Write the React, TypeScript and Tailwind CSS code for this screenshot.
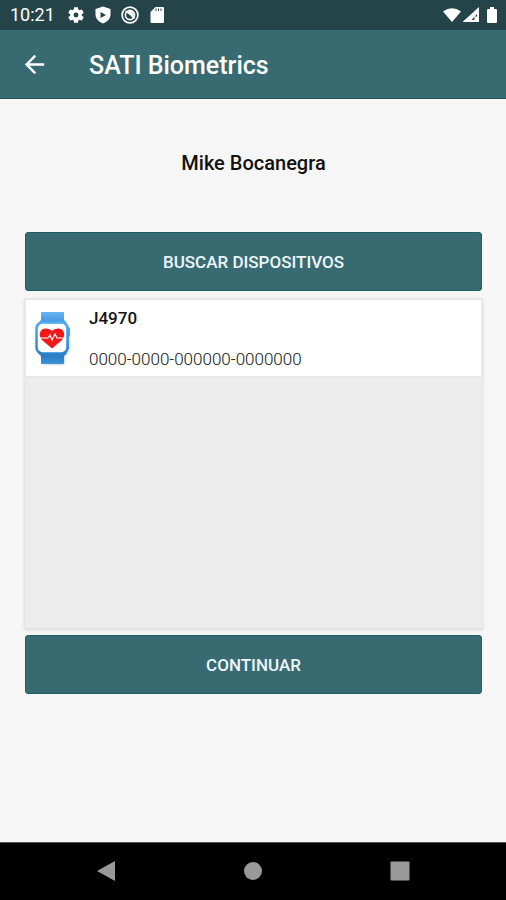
import React from "react";

function StatusBar() {
  return (
    <div className="flex h-[30px] items-center justify-between bg-[#25444a] pr-2 pl-2.5 text-white">
      <div className="flex items-center gap-3">
        <time className="w-[45px] text-lg leading-5 whitespace-nowrap">10:21</time>
        <div className="flex items-center gap-[9px]">
          <svg viewBox="1 1 22 22" className="size-[18px]" fill="currentColor" aria-hidden="true">
            <path d="M19.14 12.94c.04-.3.06-.61.06-.94s-.02-.64-.07-.94l2.03-1.58a.5.5 0 0 0 .12-.61l-1.92-3.32a.49.49 0 0 0-.59-.22l-2.39.96a7 7 0 0 0-1.62-.94l-.36-2.54A.48.48 0 0 0 13.92 2.4h-3.84a.47.47 0 0 0-.47.41l-.36 2.54a7.2 7.2 0 0 0-1.62.94l-2.39-.96a.48.48 0 0 0-.59.22L2.74 8.87a.47.47 0 0 0 .12.61l2.03 1.58a6 6 0 0 0 0 1.88l-2.03 1.58a.5.5 0 0 0-.12.61l1.92 3.32c.12.22.37.29.59.22l2.39-.96c.5.38 1.03.7 1.62.94l.36 2.54c.05.24.24.41.48.41h3.84c.24 0 .44-.17.47-.41l.36-2.54a7 7 0 0 0 1.62-.94l2.39.96c.22.08.47 0 .59-.22l1.92-3.32a.47.47 0 0 0-.12-.61zM12 15a3 3 0 1 1 0-6 3 3 0 0 1 0 6z" />
          </svg>
          <svg viewBox="0 0 18 18" className="size-[18px]" aria-hidden="true">
            <path d="M9 .5 16.500 3v5.500c0 4.200-3.200 7.400-7.500 9-4.300-1.600-7.500-4.800-7.500-9V3z" fill="currentColor" />
            <path d="m6.500 6 5.500 3-5.500 3z" fill="#25444a" />
          </svg>
          <svg viewBox="0 0 18 18" className="size-[18px]" fill="none" stroke="currentColor" aria-hidden="true">
            <circle cx="9" cy="9" r="7.900" strokeWidth="1.700" />
            <circle cx="9" cy="9" r="4.600" strokeWidth="1.600" />
            <path d="M4.500 5.500c3 0 5.500 3 9 7M7.500 5.500c2 0 4 1 5 4" strokeWidth="1.800" />
          </svg>
          <svg viewBox="0 0 18 18" className="size-[18px]" aria-hidden="true">
            <path d="M7.500 1H15q1 0 1 1v14q0 1-1 1H3.500q-1 0-1-1V6z" fill="currentColor" />
            <path d="M8 2.500v2.500M10.500 2.500v2.500M13 2.500v2.500" stroke="#25444a" strokeWidth="1" />
          </svg>
        </div>
      </div>
      <div className="flex items-center gap-1">
        <svg viewBox="0 0 40 18" className="h-[18px] w-10" fill="currentColor" aria-hidden="true">
          <path d="M1 5.500Q10 -1 19 5.500L10 16z" />
          <path fillRule="evenodd" d="M37 1v15H20.500zM35 8l-5.500 6H32.500V10.500H35z" />
        </svg>
        <svg viewBox="0 0 12 18" className="h-[18px] w-3" fill="currentColor" aria-hidden="true">
          <path d="M4 1h4v2h2q1 0 1 1v12q0 1-1 1H2q-1 0-1-1V4q0-1 1-1h2z" />
        </svg>
      </div>
    </div>
  );
}

function WatchIcon() {
  return (
    <svg viewBox="0 0 40 56" className="h-14 w-10 shrink-0" aria-hidden="true">
      <defs>
        <linearGradient id="band" x1="0" y1="0" x2="0" y2="1">
          <stop offset="0" stopColor="#67b4f2" />
          <stop offset="0.25" stopColor="#3a90d9" />
          <stop offset="0.8" stopColor="#2377bf" />
          <stop offset="1" stopColor="#3c92d6" />
        </linearGradient>
        <linearGradient id="frame" x1="0" y1="0" x2="0" y2="1">
          <stop offset="0" stopColor="#4fa9ee" />
          <stop offset="1" stopColor="#2a83cd" />
        </linearGradient>
        <filter id="soft">
          <feGaussianBlur stdDeviation="1" />
        </filter>
      </defs>
      <path d="m33 16 4 4v20l-4 6h-1v9H12l-3-2z" fill="#d3d8dc" filter="url(#soft)" />
      <path d="M9 2h21q1 0 1 1v7l3 3H5l3-3V3q0-1 1-1zM5 43h29l-3 3v7q0 1-1 1H9q-1 0-1-1v-7z" fill="url(#band)" />
      <path d="M35 17q2 0 2 2v6q0 2-2 2M35 30h1v9h-1" fill="#4ba3e8" />
      <rect x="3.500" y="12.500" width="31" height="31" rx="6" fill="#fff" stroke="url(#frame)" strokeWidth="2.500" />
      <path d="M19 38.500 9 30C4.500 24.500 7.500 18.500 12.500 18.500q4.500 0 6.500 2.500 2-2.500 6.500-2.500c5 0 8 6 3.500 11.500z" fill="#f51717" />
      <path d="M7 28h8l2-3 2 5 3-6 2 4h7" fill="none" stroke="#fff" strokeWidth="1.200" />
    </svg>
  );
}

function ActionButton({ children }: { children: React.ReactNode }) {
  return (
    <button
      type="button"
      className="h-[59px] w-full rounded-[3px] border border-[#1c6066] bg-[#386b71] pt-0.5 text-[17px] font-medium text-[#edf7fb]"
    >
      {children}
    </button>
  );
}

export default function App() {
  return (
    <div className="flex min-h-screen flex-col bg-[#f6f6f6] font-['Roboto',sans-serif] text-[#111]">
      <StatusBar />
      <header className="flex h-[69px] items-center gap-10 border-b border-[#195057] bg-[#386b71] px-5 text-white">
        <button type="button" aria-label="Volver" className="flex size-[29px] items-center justify-center">
          <svg viewBox="0 0 24 24" className="size-[29px]" fill="currentColor" aria-hidden="true">
            <path d="M20 11H7.830l5.590-5.590L12 4l-8 8 8 8 1.410-1.410L7.830 13H20z" />
          </svg>
        </button>
        <h1 className="pt-[3px] text-[25px] leading-8 font-medium">SATI Biometrics</h1>
      </header>
      <main className="flex flex-1 flex-col pt-[50px] pr-[23px] pl-6">
        <h2 className="text-center text-xl leading-7 font-medium">Mike Bocanegra</h2>
        <div className="mt-[55px] px-px">
          <ActionButton>BUSCAR DISPOSITIVOS</ActionButton>
        </div>
        <ul className="mt-[7px] h-[331px] border-2 border-[#e8e8e8] bg-[#ededed] shadow-sm">
          <li className="flex h-[78px] items-center gap-4 border-b-2 border-[#e8e8e8] bg-white px-[7px]">
            <WatchIcon />
            <div className="flex flex-col gap-[17px]">
              <span className="text-[17px] leading-6 font-medium">J4970</span>
              <span className="text-[17px] leading-6 font-light">0000-0000-000000-0000000</span>
            </div>
          </li>
        </ul>
        <div className="mt-1.5 px-px">
          <ActionButton>CONTINUAR</ActionButton>
        </div>
      </main>
      <nav className="flex h-[58px] items-center justify-around border-t border-[#555] bg-black px-[33px] pb-0.5 text-[#999]">
        <button type="button" aria-label="Atrás">
          <svg viewBox="0 0 22 22" className="size-[22px]" fill="currentColor" aria-hidden="true">
            <path d="M20 1v20L2 11z" />
          </svg>
        </button>
        <button type="button" aria-label="Inicio">
          <svg viewBox="0 0 22 22" className="size-[22px]" fill="currentColor" aria-hidden="true">
            <circle cx="11" cy="11" r="9" />
          </svg>
        </button>
        <button type="button" aria-label="Recientes">
          <svg viewBox="0 0 22 22" className="size-[22px]" fill="currentColor" aria-hidden="true">
            <rect x="1.500" y="1.500" width="19" height="19" rx="1" />
          </svg>
        </button>
      </nav>
    </div>
  );
}
